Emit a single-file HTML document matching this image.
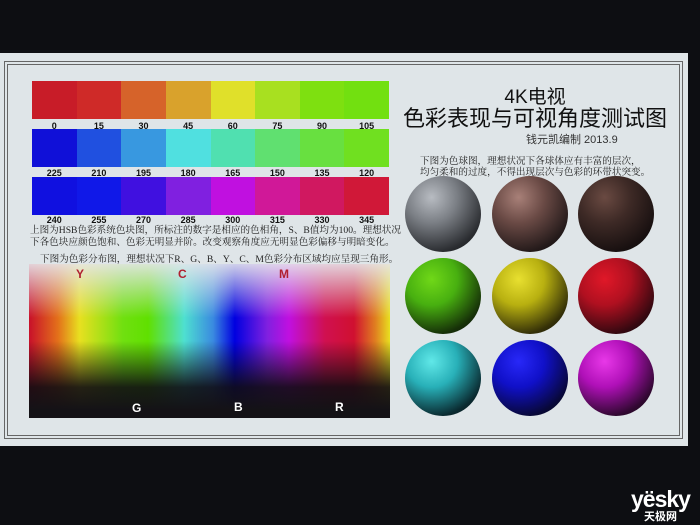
<!DOCTYPE html>
<html><head><meta charset="utf-8"><style>
body{margin:0;width:700px;height:525px;background:#0d0e12;position:relative;overflow:hidden;font-family:"Liberation Sans","Noto Sans CJK SC",sans-serif}
.scr{position:absolute;left:0;top:53px;width:688px;height:393px;background:#dfe5e8}
.f1{position:absolute;left:4px;top:8px;width:677px;height:376px;border:1px solid #666}
.f2{position:absolute;left:7px;top:11px;width:671px;height:370px;border:1px solid #666}
.row{position:absolute;left:32px;width:357px;height:38px;display:flex}
.row div{flex:1}
.lab{position:absolute;left:32px;width:357px;display:flex;font-weight:bold;font-size:9px;color:#111}
.lab span{flex:1;text-align:center}
.t{position:absolute;font-family:"Liberation Serif","Noto Serif CJK SC",serif;font-size:9.6px;color:#222;white-space:nowrap}
.grad{position:absolute;left:29px;top:264px;width:361px;height:154px;
background:linear-gradient(to bottom,rgba(230,230,235,.9) 0%,rgba(230,230,235,0) 35%,rgba(0,0,0,0) 50%,rgba(15,12,18,.9) 80%,#141216 95%),
linear-gradient(to right,#c8102a 0%,#e3701a 8%,#e8e020 14%,#70e010 26%,#60e000 33%,#4ee0d0 43%,#3a8ae0 51%,#0000e0 57%,#8020e0 66%,#c010e0 72%,#d01050 82%,#d01030 90%,#e08020 96%,#e8e020 100%)}
.gl{position:absolute;font-weight:bold;font-size:12px}
.sp{position:absolute;width:76px;height:76px;border-radius:50%}
</style></head><body>
<div class="scr">
<div class="f1"></div><div class="f2"></div>
</div>
<div class="row" style="top:81px"><div style="background:#c81c28"></div><div style="background:#cf2a28"></div><div style="background:#d6632a"></div><div style="background:#d9a22c"></div><div style="background:#e0e02a"></div><div style="background:#a8e020"></div><div style="background:#7ee010"></div><div style="background:#72e010"></div></div>
<div class="lab" style="top:121px"><span>0</span><span>15</span><span>30</span><span>45</span><span>60</span><span>75</span><span>90</span><span>105</span></div>
<div class="row" style="top:129px"><div style="background:#1010d8"></div><div style="background:#2050e0"></div><div style="background:#3898e0"></div><div style="background:#50e0e0"></div><div style="background:#50e0b0"></div><div style="background:#60e070"></div><div style="background:#68e040"></div><div style="background:#70e020"></div></div>
<div class="lab" style="top:168px"><span>225</span><span>210</span><span>195</span><span>180</span><span>165</span><span>150</span><span>135</span><span>120</span></div>
<div class="row" style="top:177px"><div style="background:#1010e0"></div><div style="background:#1018e8"></div><div style="background:#4010e0"></div><div style="background:#8020e0"></div><div style="background:#c010e0"></div><div style="background:#d01898"></div><div style="background:#d01860"></div><div style="background:#d01838"></div></div>
<div class="lab" style="top:215px"><span>240</span><span>255</span><span>270</span><span>285</span><span>300</span><span>315</span><span>330</span><span>345</span></div>
<div class="t" style="left:30px;top:222px">上图为HSB色彩系统色块图，所标注的数字是相应的色相角，S、B值均为100。理想状况</div>
<div class="t" style="left:30px;top:234px">下各色块应颜色饱和、色彩无明显并阶。改变观察角度应无明显色彩偏移与明暗变化。</div>
<div class="t" style="left:40px;top:251px">下图为色彩分布图，理想状况下R、G、B、Y、C、M色彩分布区域均应呈现三角形。</div>
<div class="grad"></div>
<div class="gl" style="left:76px;top:267px;color:#b02030">Y</div>
<div class="gl" style="left:178px;top:267px;color:#b02030">C</div>
<div class="gl" style="left:279px;top:267px;color:#b02030">M</div>
<div class="gl" style="left:132px;top:401px;color:#fff">G</div>
<div class="gl" style="left:234px;top:400px;color:#fff">B</div>
<div class="gl" style="left:335px;top:400px;color:#fff">R</div>
<div style="position:absolute;left:400px;top:82px;width:270px;text-align:center;font-size:19px;color:#111">4K电视</div>
<div style="position:absolute;left:400px;top:101px;width:270px;text-align:center;font-size:22px;color:#111">色彩表现与可视角度测试图</div>
<div style="position:absolute;left:526px;top:131px;font-size:11px;color:#333">钱元凯编制 2013.9</div>
<div class="t" style="left:420px;top:153px">下图为色球图，理想状况下各球体应有丰富的层次，</div>
<div class="t" style="left:420px;top:164px">均匀柔和的过度，不得出现层次与色彩的环带状突变。</div>
<div class="sp" style="left:405px;top:176px;background:radial-gradient(circle at 35% 28%,#b8bcc2 0%,#7a7e84 35%,#2a2c30 75%,#0e0f10 100%)"></div>
<div class="sp" style="left:492px;top:176px;background:radial-gradient(circle at 35% 28%,#a88078 0%,#6a4a45 35%,#241a1a 75%,#0e0a0c 100%)"></div>
<div class="sp" style="left:578px;top:176px;background:radial-gradient(circle at 35% 28%,#6a4a42 0%,#3e2a26 35%,#181010 75%,#0c0a0a 100%)"></div>
<div class="sp" style="left:405px;top:258px;background:radial-gradient(circle at 35% 28%,#70d818 0%,#48b010 35%,#163008 75%,#0a0e0a 100%)"></div>
<div class="sp" style="left:492px;top:258px;background:radial-gradient(circle at 35% 28%,#e8e030 0%,#b8b010 35%,#343008 75%,#0e0e0a 100%)"></div>
<div class="sp" style="left:578px;top:258px;background:radial-gradient(circle at 35% 28%,#e01828 0%,#b01020 35%,#340810 75%,#0e080a 100%)"></div>
<div class="sp" style="left:405px;top:340px;background:radial-gradient(circle at 35% 28%,#60e8e8 0%,#28b0b8 35%,#0a2a30 75%,#0a0e10 100%)"></div>
<div class="sp" style="left:492px;top:340px;background:radial-gradient(circle at 35% 28%,#2828f8 0%,#1010c8 35%,#080838 75%,#08080e 100%)"></div>
<div class="sp" style="left:578px;top:340px;background:radial-gradient(circle at 35% 28%,#e838e8 0%,#b010b8 35%,#300830 75%,#0e080e 100%)"></div>
<div style="position:absolute;left:631px;top:489px;color:#fff;font-weight:bold;font-size:23px;line-height:20px;letter-spacing:-1px">yësky</div>
<div style="position:absolute;left:644px;top:508px;color:#fff;font-weight:bold;font-size:11px">天极网</div>
</body></html>
